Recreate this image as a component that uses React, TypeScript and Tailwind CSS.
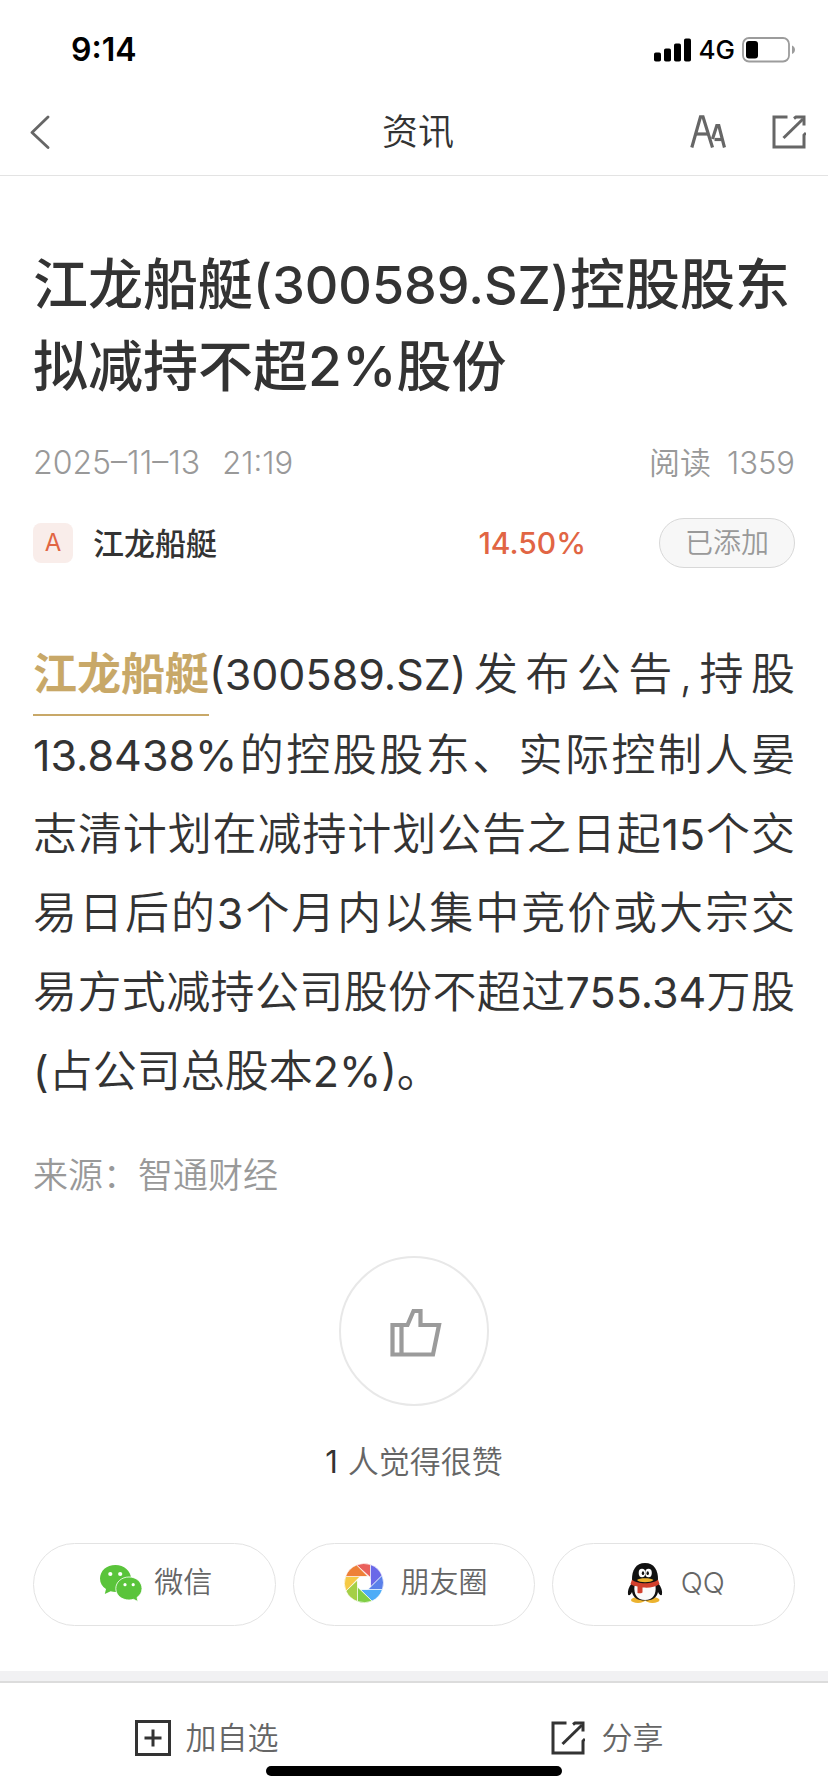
import React from 'react';
import { clsx } from 'clsx';

const ShareSquareIcon = ({ className }: { className?: string }) => (
  <svg viewBox="0 0 34 34" className={className} fill="none" stroke="currentColor" strokeWidth="3" aria-hidden="true">
    <path d="M15.500 2H2V32H32V20L34 18" />
    <path d="M11.500 23L31 4" />
    <path d="M22 3.500L24 2H32V10.500" />
  </svg>
);

const FontSizeIcon = () => (
  <svg viewBox="0 0 36 33" className="h-[33px] w-9" fill="none" stroke="currentColor" strokeWidth="3.200" aria-hidden="true">
    <path d="M1.800 32.500L10.500 1.800H13L22.500 32.500" />
    <path d="M5 19H19" />
    <path d="M22.500 24L26.800 10.500H28.800L34.500 32.500" />
    <path d="M24.500 24.500H31.500" />
  </svg>
);

const SignalIcon = () => (
  <svg viewBox="0 0 38 24" className="h-6 w-[38px]" aria-hidden="true">
    <rect x="0" y="14.500" width="7" height="9" rx="1.800" />
    <rect x="10" y="10.500" width="7" height="13" rx="1.800" />
    <rect x="20" y="5.500" width="7" height="18" rx="1.800" />
    <rect x="30" y="0.500" width="7" height="23" rx="1.800" />
  </svg>
);

const BatteryIcon = () => (
  <svg viewBox="0 0 54 26" className="h-[26px] w-[54px]" aria-hidden="true">
    <rect x="1" y="1" width="46" height="23.500" rx="6" fill="none" stroke="#9c9c9c" strokeWidth="1.800" />
    <rect x="4" y="4" width="12" height="17.500" rx="3" fill="#000" />
    <path d="M50 8.500C54 10 54 15.500 50 17Z" fill="#9c9c9c" />
  </svg>
);

const ThumbIcon = () => (
  <svg viewBox="0 0 52 50" className="h-[50px] w-[52px]" fill="none" stroke="#9b9b9b" strokeWidth="4.200" aria-hidden="true">
    <path d="M2.500 17H17.500L23.500 3H30.500V17H49L43 46.500H2.500Z" />
    <path d="M11.500 17V46" />
  </svg>
);

const WechatIcon = () => (
  <svg viewBox="0 0 42 38" className="h-[38px] w-[42px]" aria-hidden="true">
    <path d="M15.500 1C6.500 1 0 6.800 0 14.500C0 19 2.200 22.400 6 25L4.800 30L10.600 27.200C12.300 27.700 14 28 15.500 28C24 28 31 22 31 14.500S24 1 15.500 1Z" fill="#5ac43b" />
    <path d="M29 13C21.700 13 15.800 18 15.800 24.600S21.700 36 29 36C30.500 36 32 35.700 33.400 35.300L38 37.500L37 33.500C40.200 31.300 42 28.200 42 24.600C42 18 36.300 13 29 13Z" fill="#5ac43b" stroke="#fff" strokeWidth="0.800" />
    <circle cx="10.300" cy="10" r="2.100" fill="#fff" />
    <circle cx="20.200" cy="10" r="2.100" fill="#fff" />
    <circle cx="25" cy="20.700" r="1.600" fill="#fff" />
    <circle cx="33.200" cy="20.700" r="1.600" fill="#fff" />
  </svg>
);

const MomentsIcon = () => (
  <svg viewBox="0 0 40 40" className="size-10" aria-hidden="true">
    <g stroke="#fff" strokeWidth="0.600">
      <path d="M12.600 2A19.500 19.500 0 0 1 26.500 1.600V14.500Z" fill="#e9605c" />
      <path d="M26.500 1.600A19.500 19.500 0 0 1 38 12.600L26.500 24Z" fill="#6a68e8" />
      <path d="M38 12.600A19.500 19.500 0 0 1 38.400 26.500H24Z" fill="#5a80ea" />
      <path d="M38.400 26.500A19.500 19.500 0 0 1 28 38L16.500 26.500Z" fill="#4eacf7" />
      <path d="M28 38A19.500 19.500 0 0 1 13.500 38.400V24Z" fill="#80ce45" />
      <path d="M13.500 38.400A19.500 19.500 0 0 1 2 28L13.500 17Z" fill="#a5cf46" />
      <path d="M2 28A19.500 19.500 0 0 1 1.600 13.500H16Z" fill="#f5c945" />
      <path d="M1.600 13.500A19.500 19.500 0 0 1 12.600 2L24 13.500Z" fill="#ee8038" />
    </g>
    <path d="M16.500 13.500H23.500L26.500 16.500V23.500L23.500 26.500H16.500L13.500 23.500V16.500Z" fill="#fff" />
  </svg>
);

const QQIcon = () => (
  <svg viewBox="0 0 36 42" className="h-[42px] w-9" aria-hidden="true">
    <ellipse cx="11" cy="38" rx="7" ry="3" fill="#ecb32f" />
    <ellipse cx="25.500" cy="38" rx="7" ry="3" fill="#ecb32f" />
    <path d="M5 21C1.500 25 .5 29 1 32.500C2 34.500 4 32 5 30C6 36 11 38.500 18 38.500S30 36 31 30C32 32 34 34.500 35 32.500C35.500 29 34.500 25 31 21Z" fill="#111" />
    <path d="M7.500 24C6.500 32 10 38 18 38S29.500 32 28.500 24Z" fill="#fafafa" />
    <path d="M5 19C4.500 8 9 1 18 1S31.500 8 31 19C27 23 9 23 5 19Z" fill="#111" />
    <path d="M5 17.500C10 22.500 26 22.500 31 17.500L32.500 22C28 25.500 22 26 15.500 25.500V30.500C14 31.500 12 31.500 10.500 31V24.500C7.500 24 5.500 23.500 3.500 22Z" fill="#d13f2c" />
    <ellipse cx="15" cy="11" rx="3.300" ry="4.200" fill="#fff" />
    <ellipse cx="21.500" cy="11" rx="3.300" ry="4.200" fill="#fff" />
    <ellipse cx="16" cy="11.200" rx="1.200" ry="1.900" fill="#111" />
    <ellipse cx="20.700" cy="11.200" rx="1.200" ry="1.900" fill="#111" />
    <path d="M10 18C12 15.500 24 15.500 26.500 18C24 21 12 21 10 18Z" fill="#ecb32f" />
  </svg>
);

const AddSquareIcon = () => (
  <svg viewBox="0 0 36 36" className="size-9" fill="none" stroke="#333" strokeWidth="3" aria-hidden="true">
    <path d="M1.500 1.500H34.500V34.500H1.500Z" />
    <path d="M18 9.500V26.500M9.500 18H26.500" />
  </svg>
);

const shareTargets = [
  { name: '微信', icon: <WechatIcon />, gap: 'gap-3' },
  { name: '朋友圈', icon: <MomentsIcon />, gap: 'gap-4' },
  { name: 'QQ', icon: <QQIcon />, gap: 'gap-[18px]' },
];

// digits and latin run one weight above the chinese text
const Num = ({ children }: { children: React.ReactNode }) => <span className="text-[43px] leading-none font-normal">{children}</span>;

const StatusBar = () => (
  <div className="flex h-[88px] items-center justify-between pt-3 pr-8 pl-[71px] text-black">
    <span className="text-[32px] leading-none font-semibold">9:14</span>
    <div className="flex items-center gap-[7px]">
      <SignalIcon />
      <span className="text-[26px] leading-none font-medium">4G</span>
      <BatteryIcon />
    </div>
  </div>
);

const NavBar = () => (
  <header className="grid h-[88px] grid-cols-3 items-center border-b border-[#e3e3e3] pr-[22px] pl-[30px] text-[#666]">
    <button type="button" aria-label="返回" className="justify-self-start">
      <svg viewBox="0 0 20 34" className="h-[34px] w-5" fill="none" stroke="currentColor" strokeWidth="2.800" strokeLinecap="round" strokeLinejoin="round">
        <path d="M18 2L2 17.500L18 32.500" />
      </svg>
    </button>
    <h2 className="justify-self-center text-4xl leading-none font-[350] text-[#333]">资讯</h2>
    <div className="flex items-center gap-[46px] justify-self-end">
      <button type="button" aria-label="字号"><FontSizeIcon /></button>
      <button type="button" aria-label="分享"><ShareSquareIcon className="size-[34px]" /></button>
    </div>
  </header>
);

const App = () => {
  return (
    <div className="relative flex min-h-screen flex-col bg-white font-['Inter','Noto_Sans_CJK_SC',sans-serif] font-[350] text-[#333]">
      <StatusBar />
      <NavBar />

      <main className="flex-1 px-[33px] pt-[67px] pb-10">
        <h1 className="text-[55px] leading-[82px] font-medium">江龙船艇<span className="text-[52px] leading-none">(300589.SZ)</span>控股股东拟减持不超2%股份</h1>

        <div className="mt-9 flex items-center justify-between text-[31px] leading-[40px] text-[#999]">
          <p className="flex gap-[22px]"><span className="text-[32px]">2025–11–13</span><span>21:19</span></p>
          <p className="flex gap-4"><span>阅读</span><span>1359</span></p>
        </div>

        <div className="mt-[35px] flex h-[50px] items-center">
          <span className="flex size-10 items-center justify-center rounded-lg bg-[#f9edea] text-2xl leading-none font-normal text-[#e16544]">A</span>
          <a href="#stock" className="ml-5 flex-1 text-[31px] leading-none font-medium">江龙船艇</a>
          <span className="text-[30px] leading-none font-medium text-[#e16544]">14.50%</span>
          <button type="button" className="ml-[73px] h-[50px] w-[136px] rounded-full border border-[#d8d8d8] bg-[#f7f7f7] text-[28px] leading-none text-[#999]">已添加</button>
        </div>

        <p className="mt-[67px] text-justify text-[44px] leading-[79px]">
          <a href="#stock" className="inline-block border-b-2 border-[#c8a868] font-bold text-[#c8a868]">江龙船艇</a><Num>(300589.SZ)</Num>发布公告,持股<Num>13.8438%</Num>的控股股东、实际控制人晏志清计划在减持计划公告之日起<Num>15</Num>个交易日后的<Num>3</Num>个月内以集中竞价或大宗交易方式减持公司股份不超过<Num>755.34</Num>万股<Num>(</Num>占公司总股本<Num>2%)</Num>。
        </p>
        <p className="mt-10 text-[35px] leading-[48px] text-[#999]">来源：智通财经</p>

        <div className="mt-[57px] flex flex-col items-center">
          <button type="button" aria-label="点赞" className="flex size-[150px] items-center justify-center rounded-full border-2 border-[#e8e8e8] pt-1 pl-1">
            <ThumbIcon />
          </button>
          <p className="mt-9 flex gap-2.5 text-[31px] leading-[40px] text-[#666]"><span className="font-normal text-[#333]">1</span><span>人觉得很赞</span></p>
        </div>

        <div className="mt-[61px] grid grid-cols-3 gap-[17px]">
          {shareTargets.map(({ name, icon, gap }) => (
            <button type="button" key={name} className={clsx('flex h-[83px] items-center justify-center rounded-full border border-[#e3e3e3] pb-1 pl-1 text-[29px] leading-none text-[#666]', gap)}>
              {icon}
              <span>{name}</span>
            </button>
          ))}
        </div>
      </main>

      <div className="h-2.5 bg-[#f1f1f3]" />
      <footer className="grid h-[111px] grid-cols-2 border-t-2 border-[#dcdcdc] text-[31px] leading-none text-[#666]">
        <button type="button" className="flex items-center justify-center gap-[15px]">
          <AddSquareIcon />
          <span className="w-[94px] text-left whitespace-nowrap">加自选</span>
        </button>
        <button type="button" className="flex items-center justify-center gap-[17px]">
          <ShareSquareIcon className="size-[34px] text-[#333]" />
          <span className="w-[90px] text-left whitespace-nowrap">分享</span>
        </button>
      </footer>
      <div className="absolute bottom-4 left-1/2 h-2.5 w-[296px] -translate-x-1/2 rounded-full bg-black" />
    </div>
  );
};

export default App;
